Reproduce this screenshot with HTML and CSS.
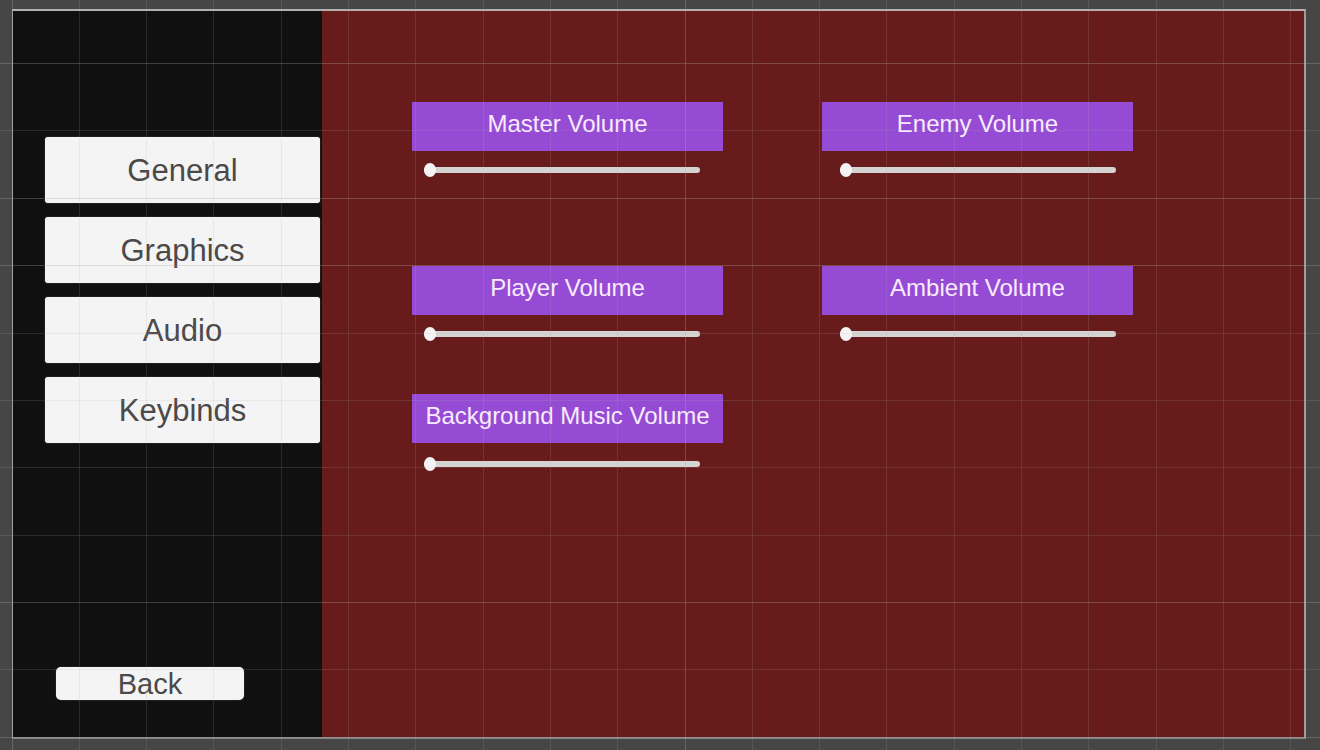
FILE: index.html
```html
<!DOCTYPE html>
<html lang="en">
<head>
<meta charset="utf-8">
<meta name="viewport" content="width=device-width, initial-scale=1">
<title>Audio Settings</title>
<link rel="stylesheet" href="styles.css">
</head>
<body>
<div class="screen">
  <nav class="sidebar" aria-label="Settings">
    <div class="tabs">
      <button class="tab" type="button">General</button>
      <button class="tab" type="button">Graphics</button>
      <button class="tab" type="button">Audio</button>
      <button class="tab" type="button">Keybinds</button>
    </div>
    <button class="back" type="button">Back</button>
  </nav>
  <main class="panel">
    <div class="volume volume-spaced">
      <label class="volume-label" for="master">Master Volume</label>
      <input class="slider" id="master" type="range" min="0" max="100" value="0">
    </div>
    <div class="volume volume-spaced volume-right">
      <label class="volume-label" for="enemy">Enemy Volume</label>
      <input class="slider" id="enemy" type="range" min="0" max="100" value="0">
    </div>
    <div class="volume">
      <label class="volume-label" for="player">Player Volume</label>
      <input class="slider" id="player" type="range" min="0" max="100" value="0">
    </div>
    <div class="volume volume-right">
      <label class="volume-label" for="ambient">Ambient Volume</label>
      <input class="slider" id="ambient" type="range" min="0" max="100" value="0">
    </div>
    <div class="volume volume-music">
      <label class="volume-label" for="music">Background Music Volume</label>
      <input class="slider" id="music" type="range" min="0" max="100" value="0">
    </div>
  </main>
</div>
<svg class="grid" aria-hidden="true">
  <defs>
    <pattern id="lines" x="12" y="63" width="673" height="674" patternUnits="userSpaceOnUse">
      <path class="grid-line" d="M0 0h1v674h-1zM67 0h1v674h-1zM134 0h1v674h-1zM201 0h1v674h-1zM269 0h1v674h-1zM336 0h1v674h-1zM403 0h1v674h-1zM471 0h1v674h-1zM538 0h1v674h-1zM605 0h1v674h-1z"/>
      <path class="grid-line" d="M0 0h673v1H0zM0 67h673v1H0zM0 135h673v1H0zM0 202h673v1H0zM0 270h673v1H0zM0 337h673v1H0zM0 404h673v1H0zM0 472h673v1H0zM0 539h673v1H0zM0 606h673v1H0z"/>
      <path class="grid-line" d="M0 0h673v1H0zM0 135h673v1H0zM0 202h673v1H0zM0 539h673v1H0zM0 0h1v674h-1z"/>
    </pattern>
  </defs>
  <rect width="100%" height="100%" fill="url(#lines)"/>
</svg>
</body>
</html>
```
FILE: styles.css
```css
* {
  box-sizing: border-box;
}

body {
  margin: 0;
  min-height: 100vh;
  padding: 9px 14px 11px 12px;
  display: flex;
  position: relative;
  background: #464646;
  font-family: "Liberation Sans", Arial, sans-serif;
}

.screen {
  flex: 1;
  display: flex;
  border: 2px solid #a09b9b;
  border-top-color: #b5b0b0;
  border-bottom-color: #858282;
  border-left-width: 1px;
}

.sidebar {
  flex: 0 0 309px;
  display: flex;
  flex-direction: column;
  justify-content: space-between;
  padding: 126px 2px 37px 32px;
  background: #101010;
}

.tabs {
  display: flex;
  flex-direction: column;
  gap: 14px;
}

.tab,
.back {
  padding: 2px 0 0;
  border: 0;
  background: #f4f4f4;
  color: #4b4949;
  font-family: inherit;
  box-shadow: 0 0 1px #a0a0a0;
  cursor: pointer;
}

.tab {
  height: 66px;
  border-radius: 3px;
  font-size: 31px;
}

.back {
  width: 188px;
  height: 33px;
  margin-left: 11px;
  border-radius: 5px;
  font-size: 29px;
  line-height: 31px;
}

.panel {
  flex: 1;
  display: grid;
  grid-template-columns: repeat(2, minmax(0, 311px));
  align-content: start;
  column-gap: 99px;
  row-gap: 53px;
  padding: 91px 90px 40px;
  background: #681b1b;
}

.volume {
  display: flex;
  flex-direction: column;
  gap: 12px;
}

.volume-spaced {
  margin-bottom: 36px;
}

.volume-music {
  gap: 14px;
}

.volume-label {
  height: 49px;
  padding-bottom: 6px;
  display: flex;
  align-items: center;
  justify-content: center;
  background: #964bd4;
  color: #f8ebff;
  font-size: 24px;
  white-space: nowrap;
}

.slider {
  -webkit-appearance: none;
  appearance: none;
  width: 276px;
  max-width: 100%;
  height: 14px;
  margin: 0 0 0 12px;
  background: transparent;
}

.volume-right .slider {
  margin-left: 18px;
}

.slider::-webkit-slider-runnable-track {
  height: 6px;
  border-radius: 3px;
  background: #d6d3d3;
}

.slider::-webkit-slider-thumb {
  -webkit-appearance: none;
  width: 12px;
  height: 14px;
  margin-top: -4px;
  border-radius: 50%;
  background: #f4f4f4;
}

.grid {
  position: absolute;
  inset: 0;
  width: 100%;
  height: 100%;
  pointer-events: none;
}

.grid-line {
  fill: #acacac;
  fill-opacity: 0.17;
}
```
